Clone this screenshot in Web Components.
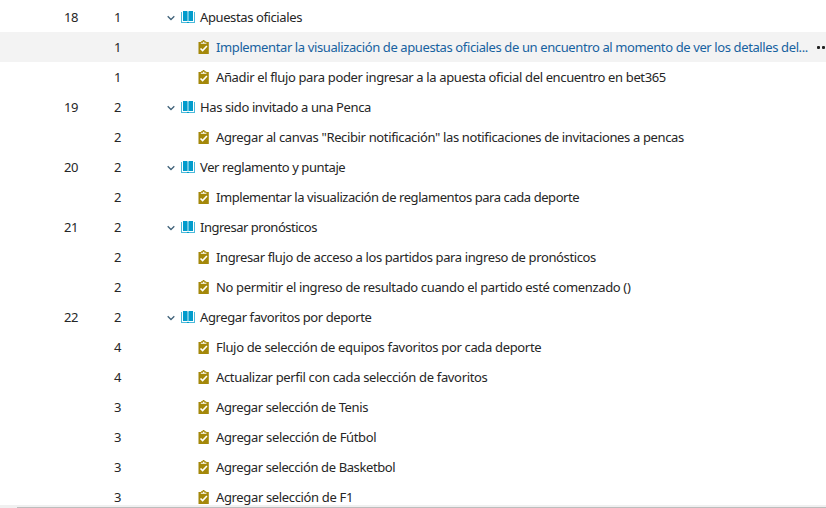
<!DOCTYPE html>
<html lang="es">
<head>
<meta charset="utf-8">
<title>Backlog</title>
<style>
html, body { margin: 0; height: 100%; overflow: hidden; background: #fff; }
</style>
</head>
<body>
<backlog-grid></backlog-grid>
<script>
class ChevronIcon extends HTMLElement {
  constructor() {
    super();
    this.attachShadow({ mode: 'open' }).innerHTML = `<style>:host{display:block;width:8px;height:6px}svg{display:block}</style>
<svg width="8" height="6" viewBox="0 0 8 6"><path d="M.7 1.200 4 4.500 7.300 1.200" fill="none" stroke="#41637a" stroke-width="1.300"/></svg>`;
  }
}
customElements.define('chevron-icon', ChevronIcon);

class BookIcon extends HTMLElement {
  constructor() {
    super();
    this.attachShadow({ mode: 'open' }).innerHTML = `<style>:host{display:block;width:14px;height:12px}svg{display:block}</style>
<svg width="14" height="12" viewBox="0 0 14 12" fill="#009ccc"><path d="M2 0h3.500C6.300 0 6.600.3 6.600 1v9.500C6.300 10.100 6 10 5.500 10H2zM12 0H8.500C7.700 0 7.400.3 7.400 1v9.500c.3-.4.6-.5 1.100-.5H12z"/><path opacity=".7" d="M0 1h1v10h5.500v1H0zM14 1h-1v10H7.500v1H14z"/><path d="M6 11h2v1H6z"/></svg>`;
  }
}
customElements.define('book-icon', BookIcon);

class TaskIcon extends HTMLElement {
  constructor() {
    super();
    this.attachShadow({ mode: 'open' }).innerHTML = `<style>:host{display:block;width:11px;height:14px}svg{display:block}</style>
<svg width="11" height="14" viewBox="0 0 11 14"><path fill="#a4880a" fill-rule="evenodd" d="M.5 2H3V1.300h1.300C4.500.4 5 0 5.600 0s1.100.4 1.300 1.300h1.300V2h2.600v12H.5zM2.800 2.800v1h5.600v-1H6.300V1.700H5v1.100z"/><path d="m2.500 8.500 2.100 2.100 4.300-4.600" fill="none" stroke="#fff" stroke-width="1.600"/></svg>`;
  }
}
customElements.define('task-icon', TaskIcon);

class BacklogRow extends HTMLElement {
  constructor() {
    super();
    this.attachShadow({ mode: 'open' }).innerHTML = `<style>
:host{display:grid;grid-template-columns:64px 50px 52px 1fr;height:30px;align-items:center;box-sizing:border-box;color:#262626;font:13px/30px "Noto Sans","Open Sans",sans-serif;white-space:nowrap}
:host([active]){background:#f3f3f3}
.n{display:block;letter-spacing:-.45px}
.order{padding-left:64px;width:0}
.pri{padding-left:50px;width:0}
.item{grid-column:4;display:flex;align-items:center;height:30px}
chevron-icon{margin:1px 6px 0 1px}
book-icon{margin-right:5px}
task-icon{margin:0 7px 0 32px}
:host([active]) .title{color:#1762a0}
.more{display:flex;gap:2px;margin-left:9px}
.more i{width:3px;height:3px;border-radius:1px;background:#222;flex:none}
</style>
<span class="n order"></span><span class="n pri"></span>
<div class="item"><span class="title"><slot></slot></span></div>`;
  }
  connectedCallback() {
    const root = this.shadowRoot;
    root.querySelector('.order').textContent = this.getAttribute('order') || '';
    root.querySelector('.pri').textContent = this.getAttribute('priority');
    const title = root.querySelector('.title');
    if (this.hasAttribute('story')) title.before(document.createElement('chevron-icon'), document.createElement('book-icon'));
    else title.before(document.createElement('task-icon'));
    if (this.hasAttribute('active')) {
      const more = document.createElement('span');
      more.className = 'more';
      more.innerHTML = '<i></i><i></i><i></i>';
      title.after(more);
    }
    title.style.letterSpacing = '0.001px';
    const spare = Number(this.getAttribute('extent')) - title.getBoundingClientRect().width;
    title.style.letterSpacing = (spare / this.textContent.length).toFixed(4) + 'px';
  }
}
customElements.define('backlog-row', BacklogRow);

class BacklogGrid extends HTMLElement {
  constructor() {
    super();
    const rows = [
      [18, 1, 'Apuestas oficiales', 102],
      ['', 1, 'Implementar la visualización de apuestas oficiales de un encuentro al momento de ver los detalles del...', 592],
      ['', 1, 'Añadir el flujo para poder ingresar a la apuesta oficial del encuentro en bet365', 450],
      [19, 2, 'Has sido invitado a una Penca', 171],
      ['', 2, 'Agregar al canvas "Recibir notificación" las notificaciones de invitaciones a pencas', 468],
      [20, 2, 'Ver reglamento y puntaje', 145.3],
      ['', 2, 'Implementar la visualización de reglamentos para cada deporte', 363.3],
      [21, 2, 'Ingresar pronósticos', 117],
      ['', 2, 'Ingresar flujo de acceso a los partidos para ingreso de pronósticos', 380],
      ['', 2, 'No permitir el ingreso de resultado cuando el partido esté comenzado ()', 414.5],
      [22, 2, 'Agregar favoritos por deporte', 171.5],
      ['', 4, 'Flujo de selección de equipos favoritos por cada deporte', 325.3],
      ['', 4, 'Actualizar perfil con cada selección de favoritos', 271.5],
      ['', 3, 'Agregar selección de Tenis', 152],
      ['', 3, 'Agregar selección de Fútbol', 160.3],
      ['', 3, 'Agregar selección de Basketbol', 179.3],
      ['', 3, 'Agregar selección de F1', 137]
    ];
    this.attachShadow({ mode: 'open' }).innerHTML = `<style>
:host{display:grid;grid-template-rows:505px 3px;height:508px;overflow:hidden}
.rows{padding-top:2px;overflow:hidden;box-sizing:border-box}
.bar{background:#f0f0f0;display:flex;align-items:flex-end;padding-left:17px}
.thumb{height:1px;flex:1;background:#bdbdbd}
</style><div class="rows">${rows.map((r, i) => `<backlog-row order="${r[0]}" priority="${r[1]}" extent="${r[3]}"${r[0] ? ' story' : ''}${i === 1 ? ' active' : ''}>${r[2]}</backlog-row>`).join('')}</div><div class="bar"><div class="thumb"></div></div>`;
  }
}
customElements.define('backlog-grid', BacklogGrid);
</script>
</body>
</html>
